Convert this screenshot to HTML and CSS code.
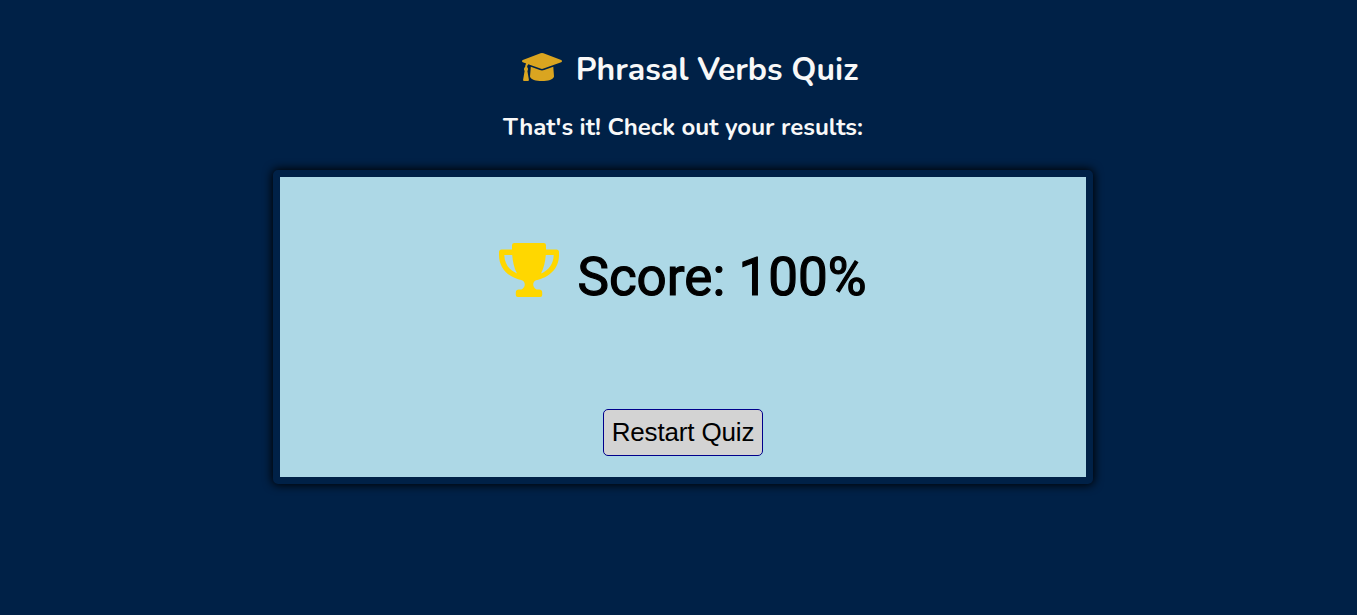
FILE: index.html
```html
<!DOCTYPE html>
<html lang="en">
<head>
<meta charset="utf-8">
<title>Phrasal Verbs Quiz</title>
<link rel="stylesheet" href="styles.css">
</head>
<body>
<main class="page">
  <h1 class="title">
    <svg class="cap" viewBox="0 0 40 28" aria-hidden="true"><path d="M18.5 .3Q20 -.2 21.5 .3L39.2 7.1Q40 7.5 40 8.2T39.2 9.3L21.6 15.6Q20 16.2 18.4 15.6L6.3 11.3Q5.2 12.2 5.1 14Q6.2 15 6 16.3Q5.9 17.3 5.4 17.9L6.9 26.8Q7 28 6 28H2Q1 28 1.1 26.8L2.6 17.9Q1.9 17.2 2 16.1Q2.1 14.8 3.1 14.1Q3.2 11.9 4.2 10.5L.8 9.3Q0 8.9 0 8.2T.8 7.1ZM8.8 13.8L17.8 17Q20 17.8 22.2 17L31.3 13.8L32 23.4C31.5 26.5 26 28 20 28S8.5 26.5 8 23.4Z"/></svg>
    <span class="title-text">Phrasal Verbs Quiz</span>
  </h1>
  <h2 class="subtitle">That's it! Check out your results:</h2>
  <section class="card">
    <div class="score">
      <svg class="trophy" viewBox="0 0 60 54" aria-hidden="true"><path fill-rule="evenodd" d="M15.3 0H44.7Q47 0 47 2.3V6.4H57.3Q60 6.4 60 9V12C60 26 50 34.5 37 37.3C33 39 33.5 44.5 37.5 46.4H40Q43.2 46.4 43.2 49.4V52Q43.2 54 41.2 54H18.8Q16.8 54 16.8 52V49.4Q16.8 46.4 20 46.4H22.5C26.5 44.5 27 39 23 37.3C10 34.5 0 26 0 12V9Q0 6.4 2.7 6.4H13V2.3Q13 0 15.3 0ZM5.3 12C5.5 21 10.5 27.5 18 30.5C15 25 13.7 18 13.2 12ZM54.7 12H46.8C46.3 18 45 25 42 30.5C49.5 27.5 54.5 21 54.7 12Z"/></svg>
      <span class="score-text">Score: 100%</span>
    </div>
    <button class="restart" type="button">Restart Quiz</button>
  </section>
</main>
</body>
</html>
```
FILE: styles.css
```css
* { box-sizing: border-box; }
html { overflow: hidden; background: #002147; }
body { margin: 0; background: #002147; font-family: Nunito, "Open Sans", sans-serif; }
.page { width: 1366px; height: 615px; padding-top: 47px; display: flex; flex-direction: column; align-items: center; }
.title { margin: 0; height: 44px; display: flex; align-items: flex-start; gap: 14px; color: #f8f8f8; font-size: 32px; font-weight: 700; line-height: 46px; white-space: nowrap; padding-left: 14px; }
.cap { width: 40px; height: 28px; margin-top: 6px; fill: goldenrod; }
.subtitle { margin: 20px 0 0; height: 33px; color: #f8f8f8; font: 700 24px/33px Nunito, Lato, sans-serif; white-space: nowrap; }
.card { width: 820px; height: 314px; margin-top: 26px; border: 7px solid #002147; border-radius: 5px; background: lightblue; box-shadow: 0 0 10px 1px #000; display: flex; flex-direction: column; align-items: center; justify-content: space-between; padding: 66px 0 21px; }
.score { display: flex; align-items: flex-start; gap: 18px; height: 70px; }
.trophy { width: 60px; height: 54px; fill: gold; }
.score-text { font: 400 53px/68px Roboto, sans-serif; color: #000; -webkit-text-stroke: 1.2px #000; white-space: nowrap; }
.restart { width: 160px; height: 47px; padding: 0; border: 1px solid darkblue; border-radius: 5px; background: lightgray; color: #000; font: 26px/45px "Liberation Sans", Arial, sans-serif; letter-spacing: -0.15px; }
```
